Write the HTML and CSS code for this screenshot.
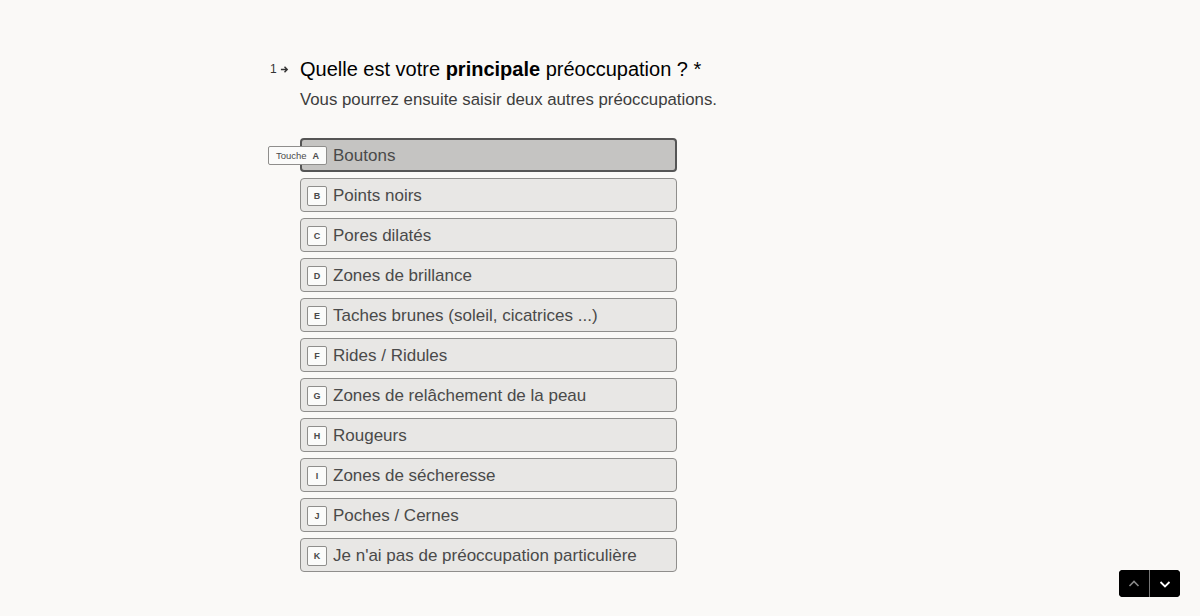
FILE: index.html
```html
<!DOCTYPE html>
<html lang="fr">
<head>
<meta charset="utf-8">
<link rel="stylesheet" href="styles.css">
</head>
<body>
<main class="page">
  <section class="question">
    <div class="qhead">
      <span class="qnum">1<svg class="qarrow" viewBox="0 0 10 10" width="9" height="9"><path d="M1 5h7M5 2l3 3-3 3" fill="none" stroke="#333" stroke-width="1.6"/></svg></span>
      <h1 class="qtitle">Quelle est votre <b>principale</b> préoccupation ? *</h1>
    </div>
    <p class="qsub">Vous pourrez ensuite saisir deux autres préoccupations.</p>
    <ul class="options">
      <li class="option selected"><span class="key hint">Touche <b>A</b></span><span class="label">Boutons</span></li>
      <li class="option"><span class="key">B</span><span class="label">Points noirs</span></li>
      <li class="option"><span class="key">C</span><span class="label">Pores dilatés</span></li>
      <li class="option"><span class="key">D</span><span class="label">Zones de brillance</span></li>
      <li class="option"><span class="key">E</span><span class="label">Taches brunes (soleil, cicatrices ...)</span></li>
      <li class="option"><span class="key">F</span><span class="label">Rides / Ridules</span></li>
      <li class="option"><span class="key">G</span><span class="label">Zones de relâchement de la peau</span></li>
      <li class="option"><span class="key">H</span><span class="label">Rougeurs</span></li>
      <li class="option"><span class="key">I</span><span class="label">Zones de sécheresse</span></li>
      <li class="option"><span class="key">J</span><span class="label">Poches / Cernes</span></li>
      <li class="option"><span class="key">K</span><span class="label">Je n'ai pas de préoccupation particulière</span></li>
    </ul>
  </section>
  <nav class="nav">
    <button class="navbtn disabled" aria-label="Précédent"><svg viewBox="0 0 14 14" width="14" height="14"><path d="M2.5 9l4.5-4.5 4.5 4.5" fill="none" stroke="currentColor" stroke-width="1.6"/></svg></button>
    <button class="navbtn" aria-label="Suivant"><svg viewBox="0 0 14 14" width="14" height="14"><path d="M2.5 5l4.5 4.5 4.5-4.5" fill="none" stroke="currentColor" stroke-width="1.8"/></svg></button>
  </nav>
</main>
</body>
</html>
```
FILE: styles.css
```css
html, body {
  margin: 0;
  padding: 0;
  background: #faf9f7;
  font-family: "Liberation Sans", Arial, sans-serif;
  color: #000;
}
.page {
  width: 1200px;
  height: 616px;
  position: relative;
  overflow: hidden;
}
.question {
  padding: 56px 0 0 300px;
}
.qhead {
  position: relative;
}
.qnum {
  position: absolute;
  left: -30px;
  top: 6px;
  font-size: 12px;
  color: #333;
  display: flex;
  align-items: center;
  gap: 3px;
}
.qtitle {
  margin: 0;
  font-size: 20px;
  font-weight: normal;
  line-height: 26px;
  color: #000;
}
.qtitle b { font-weight: bold; }
.qsub {
  margin: 6px 0 0;
  font-size: 16.8px;
  line-height: 24px;
  color: #3d3d3d;
}
.options {
  list-style: none;
  margin: 26px 0 0;
  padding: 0;
  width: 377px;
  display: flex;
  flex-direction: column;
  gap: 6px;
}
.option {
  position: relative;
  box-sizing: border-box;
  height: 34px;
  display: flex;
  align-items: center;
  gap: 6px;
  padding: 1px 6px 0;
  background: #e8e7e5;
  border: 1px solid #8f8e8c;
  border-radius: 4px;
  font-size: 17px;
  color: #4a4a4a;
}
.option.selected {
  background: #c5c4c2;
  border: 2px solid #555;
  padding: 1px 5px 0;
}
.key {
  box-sizing: border-box;
  width: 20px;
  height: 20px;
  display: flex;
  align-items: center;
  justify-content: center;
  background: #fbfbfa;
  border: 1px solid #8f8e8c;
  border-radius: 2px;
  font-size: 9px;
  font-weight: bold;
  color: #4a4a4a;
  flex: none;
}
.key.hint {
  width: 59px;
  height: 19px;
  margin-left: -39px;
  padding: 0;
  gap: 6px;
  font-weight: normal;
  font-size: 9.5px;
  color: #4a4a4a;
}
.key.hint b { font-weight: bold; font-size: 9px; }
.label {
  white-space: nowrap;
}
.nav {
  position: absolute;
  right: 20px;
  bottom: 19px;
  display: flex;
  border-radius: 4px;
  overflow: hidden;
  background: #000;
}
.navbtn {
  width: 30px;
  height: 27px;
  border: 0;
  padding: 0;
  margin: 0;
  background: #000;
  color: #fff;
  display: flex;
  align-items: center;
  justify-content: center;
}
.navbtn.disabled { color: #888; }
.navbtn + .navbtn { border-left: 1px solid #777; width: 31px; }
```
